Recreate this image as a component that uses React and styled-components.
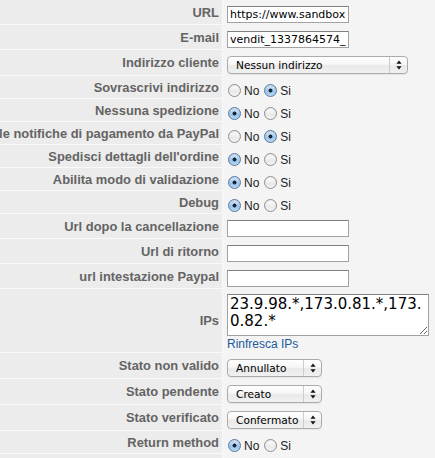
import React from 'react';
import styled, { createGlobalStyle } from 'styled-components';

const GlobalStyle = createGlobalStyle`
  html, body {
    margin: 0;
    padding: 0;
    background: #f4f4f4;
  }
  body {
    overflow: hidden;
  }
`;

const ROW_HEIGHT = { text: 25, select: 26, radio: 23, ips: 64 };
const VALUE_PAD = { text: 3, select: 3, radio: 6, ips: 0 };

/* The key column keeps its grey band down to the bottom of the page,
   below the last row as well. */
const Form = styled.div`
  display: grid;
  grid-template-columns: 223px 1fr;
  align-content: start;
  width: 435px;
  min-height: 100vh;
  background: linear-gradient(
    to right,
    #ececec 0 222px,
    #f9f9f9 222px 223px,
    #f4f4f4 223px
  );
  font-family: "Liberation Sans", Arial, sans-serif;
`;

const Key = styled.div`
  box-sizing: border-box;
  height: ${(p) => p.$h}px;
  display: flex;
  align-items: center;
  justify-content: flex-end;
  padding-right: 3px;
  overflow: hidden;
  white-space: nowrap;
  background: #ececec;
  border-bottom: 1px solid #f9f9f9;
  border-right: 1px solid #f9f9f9;
  color: #646464;
  font-weight: bold;
  font-size: 12.9px;
`;

const Value = styled.div`
  box-sizing: border-box;
  height: ${(p) => p.$h}px;
  display: flex;
  flex-direction: column;
  justify-content: ${(p) => (p.$top ? 'flex-start' : 'center')};
  align-items: flex-start;
  padding: ${(p) => (p.$top ? '5px 0 0 4px' : `${p.$pad}px 0 0 4px`)};
  overflow: hidden;
`;

const TextInput = styled.input`
  box-sizing: border-box;
  width: 122px;
  height: 17px;
  margin: 0;
  padding: 0 2px;
  border: 1px solid #a2a2a2;
  border-top-color: #7f7f7f;
  background: #fff;
  color: #000;
  font: 11px "DejaVu Sans", sans-serif;
  outline: none;
`;

const SelectBox = styled.div`
  box-sizing: border-box;
  width: ${(p) => p.$w}px;
  height: 18px;
  display: flex;
  align-items: stretch;
  border: 1px solid #ababab;
  border-radius: 4px;
  background: linear-gradient(#ffffff, #f6f6f6 45%, #e9e9e9 55%, #f1f1f1);
  box-shadow: 0 1px 1px rgba(0, 0, 0, 0.06);
  color: #000;
  font: 10.6px "DejaVu Sans", sans-serif;
`;

const SelectText = styled.span`
  flex: 1;
  display: flex;
  align-items: center;
  padding-left: 8px;
  white-space: nowrap;
  overflow: hidden;
`;

const SelectArrows = styled.span`
  width: 17px;
  flex: none;
  display: flex;
  align-items: center;
  justify-content: center;
  border-left: 1px solid #cdcdcd;
`;

const RadioGroup = styled.div`
  display: flex;
  align-items: center;
  color: #222;
  font-size: 12px;
`;

const RadioDot = styled.span`
  box-sizing: border-box;
  width: 13px;
  height: 13px;
  margin: 0 3px 0 ${(p) => (p.$first ? 1 : 5)}px;
  border-radius: 50%;
  border: 1px solid ${(p) => (p.$on ? '#5479a3' : '#8f8f8f')};
  background: ${(p) =>
    p.$on
      ? 'radial-gradient(circle, #16263a 0 1.7px, transparent 2.3px), linear-gradient(#dbeaf8, #9cc4ea 60%, #b9d7f3)'
      : 'linear-gradient(#ffffff, #e9e9e9 60%, #f4f4f4)'};
  box-shadow: inset 0 1px 1px rgba(0, 0, 0, 0.08);
`;

const Area = styled.textarea`
  box-sizing: border-box;
  width: 202px;
  height: 42px;
  margin: 0;
  padding: 1px 2px;
  border: 1px solid #a2a2a2;
  border-top-color: #7f7f7f;
  background: #fff;
  color: #000;
  font: 15px/17px "DejaVu Sans", sans-serif;
  word-break: break-all;
  overflow: hidden;
  resize: both;
  outline: none;
`;

const RefreshLink = styled.a`
  margin-top: 1px;
  color: #22599a;
  font-size: 12px;
  text-decoration: none;
`;

function Arrows() {
  return (
    <svg width="6" height="10" viewBox="0 0 6 10">
      <path d="M3 0.5 L5.6 3.8 L0.4 3.8 Z" fill="#111" />
      <path d="M3 9.5 L5.6 6.2 L0.4 6.2 Z" fill="#111" />
    </svg>
  );
}

function Select({ value, width }) {
  return (
    <SelectBox $w={width}>
      <SelectText>{value}</SelectText>
      <SelectArrows>
        <Arrows />
      </SelectArrows>
    </SelectBox>
  );
}

function YesNo({ on }) {
  return (
    <RadioGroup>
      <RadioDot $first $on={on === 'no'} />
      No
      <RadioDot $on={on === 'si'} />
      Si
    </RadioGroup>
  );
}

const fields = [
  { label: 'URL', kind: 'text', value: 'https://www.sandbox.paypal.com/cgi-bin/webscr' },
  { label: 'E-mail', kind: 'text', value: 'vendit_1337864574_biz@gmail.com' },
  { label: 'Indirizzo cliente', kind: 'select', value: 'Nessun indirizzo', width: 181 },
  { label: 'Sovrascrivi indirizzo', kind: 'radio', on: 'si' },
  { label: 'Nessuna spedizione', kind: 'radio', on: 'no' },
  { label: 'Accetta solo le notifiche di pagamento da PayPal', kind: 'radio', on: 'si' },
  { label: "Spedisci dettagli dell'ordine", kind: 'radio', on: 'no' },
  { label: 'Abilita modo di validazione', kind: 'radio', on: 'no' },
  { label: 'Debug', kind: 'radio', on: 'no' },
  { label: 'Url dopo la cancellazione', kind: 'text', value: '' },
  { label: 'Url di ritorno', kind: 'text', value: '' },
  { label: 'url intestazione Paypal', kind: 'text', value: '' },
  { label: 'IPs', kind: 'ips', value: '23.9.98.*,173.0.81.*,173.0.82.*' },
  { label: 'Stato non valido', kind: 'select', value: 'Annullato', width: 95 },
  { label: 'Stato pendente', kind: 'select', value: 'Creato', width: 95 },
  { label: 'Stato verificato', kind: 'select', value: 'Confermato', width: 95 },
  { label: 'Return method', kind: 'radio', on: 'no' },
];

function Control({ field }) {
  switch (field.kind) {
    case 'text':
      return <TextInput type="text" readOnly defaultValue={field.value} />;
    case 'select':
      return <Select value={field.value} width={field.width} />;
    case 'radio':
      return <YesNo on={field.on} />;
    case 'ips':
      return (
        <>
          <Area readOnly defaultValue={field.value} />
          <RefreshLink href="#">Rinfresca IPs</RefreshLink>
        </>
      );
    default:
      return null;
  }
}

export default function App() {
  return (
    <>
      <GlobalStyle />
      <Form>
        {fields.map((f) => (
          <React.Fragment key={f.label}>
            <Key $h={ROW_HEIGHT[f.kind]}>{f.label}</Key>
            <Value $h={ROW_HEIGHT[f.kind]} $pad={VALUE_PAD[f.kind]} $top={f.kind === 'ips'}>
              <Control field={f} />
            </Value>
          </React.Fragment>
        ))}
      </Form>
    </>
  );
}
